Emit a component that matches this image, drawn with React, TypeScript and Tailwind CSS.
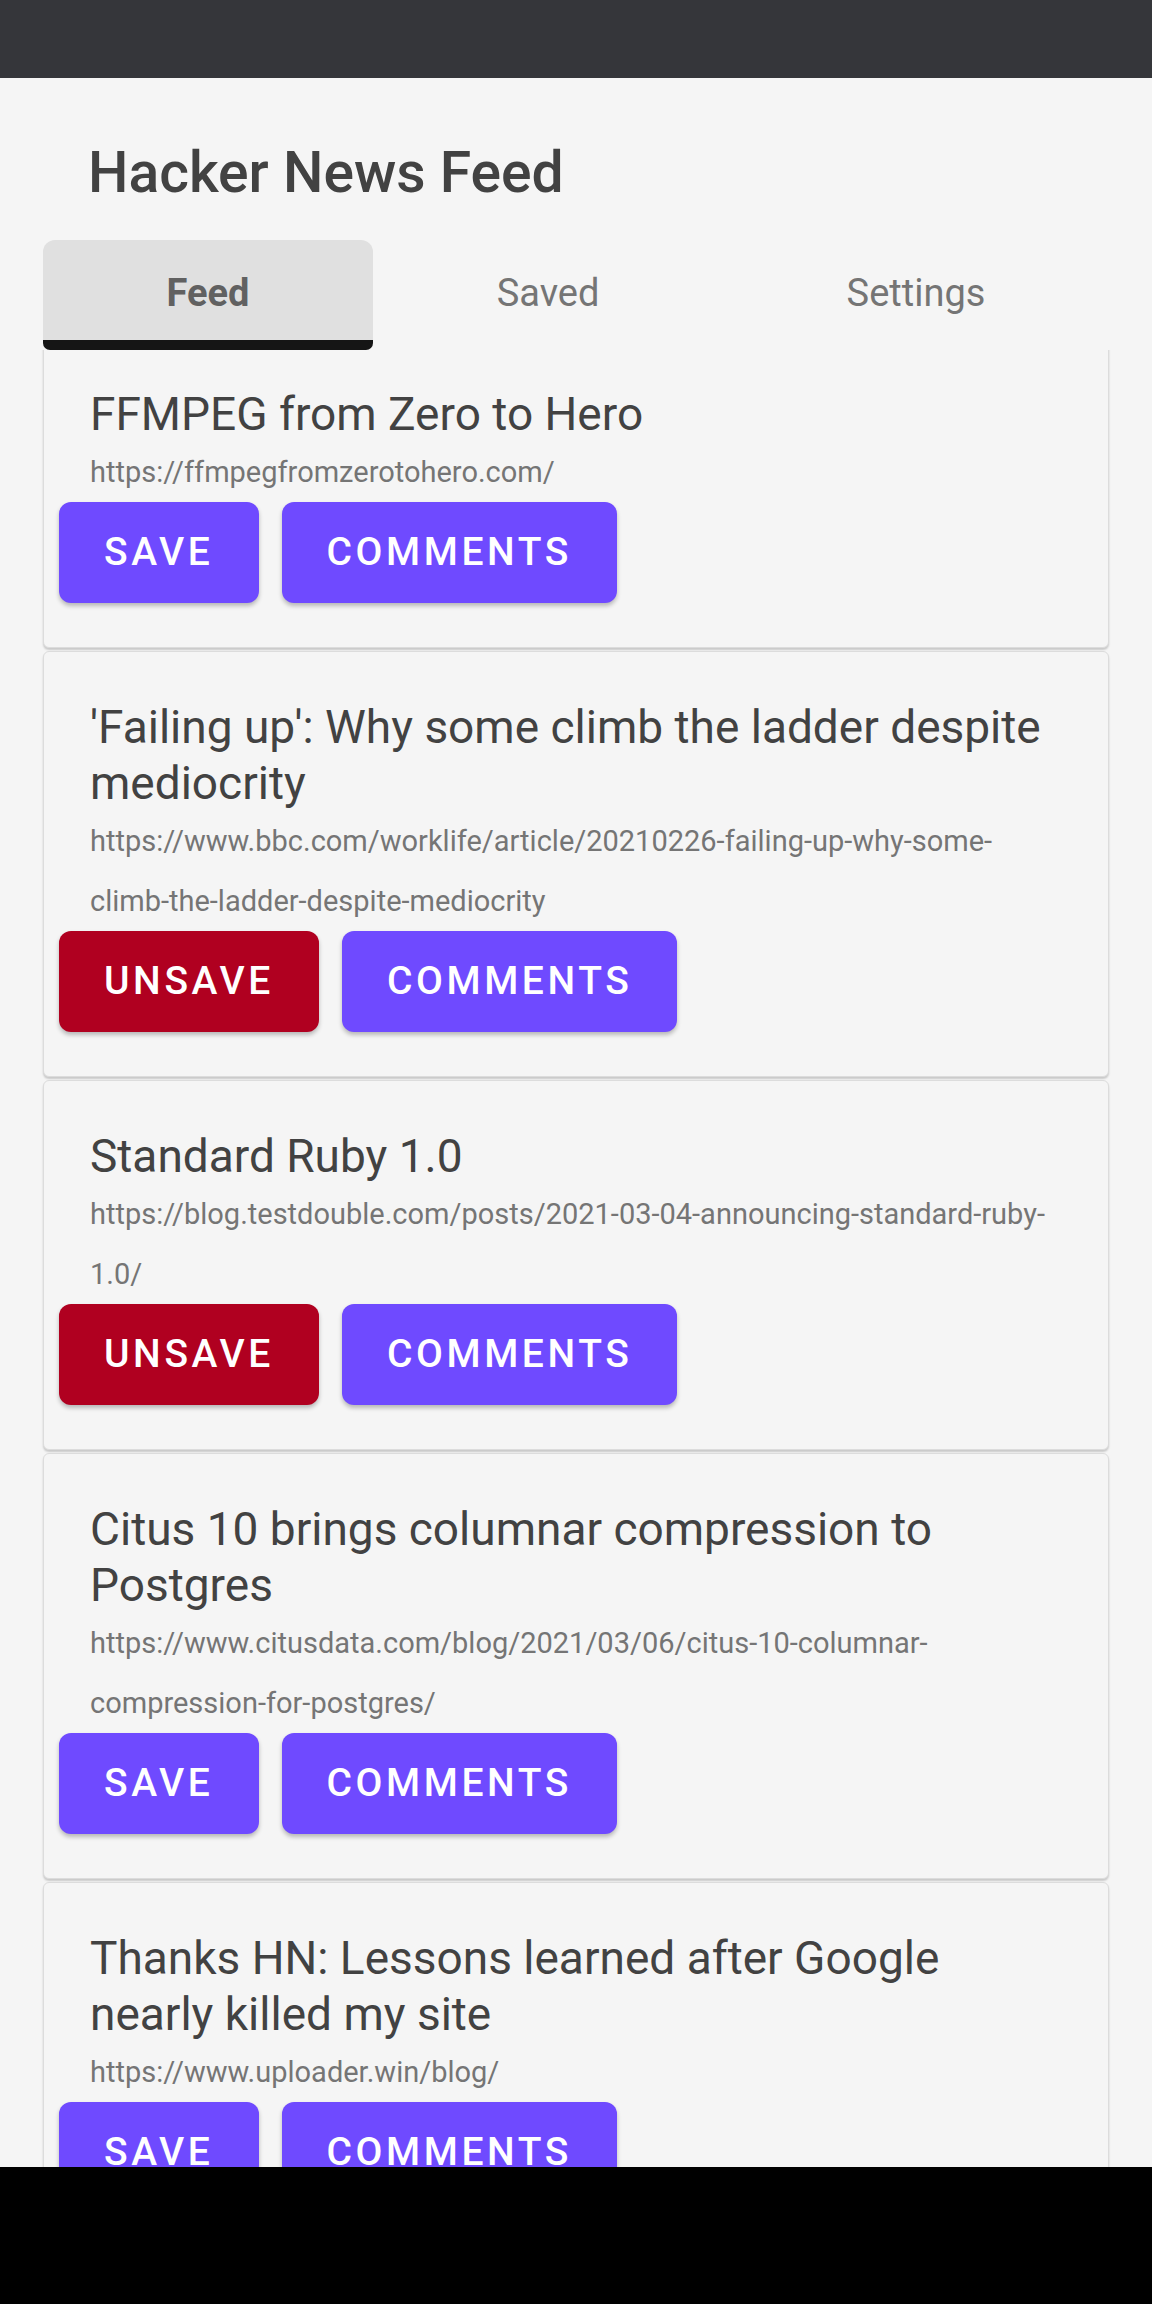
import React from "react"

type Story = {
	title: string
	url: string
	saved: boolean
}

const stories: Story[] = [
	{ title: "FFMPEG from Zero to Hero", url: "https://ffmpegfromzerotohero.com/", saved: false },
	{
		title: "'Failing up': Why some climb the ladder despite mediocrity",
		url: "https://www.bbc.com/worklife/article/20210226-failing-up-why-some-climb-the-ladder-despite-mediocrity",
		saved: true,
	},
	{
		title: "Standard Ruby 1.0",
		url: "https://blog.testdouble.com/posts/2021-03-04-announcing-standard-ruby-1.0/",
		saved: true,
	},
	{
		title: "Citus 10 brings columnar compression to Postgres",
		url: "https://www.citusdata.com/blog/2021/03/06/citus-10-columnar-compression-for-postgres/",
		saved: false,
	},
	{
		title: "Thanks HN: Lessons learned after Google nearly killed my site",
		url: "https://www.uploader.win/blog/",
		saved: false,
	},
]

const tabs = ["Feed", "Saved", "Settings"]

const StoryCard = ({ title, url, saved, first }: Story & { first?: boolean }) => {
	return (
		<div
			className={`mb-[3px] rounded-[6px] border border-[#dcdcdc] bg-[#f5f5f5] px-[15px] pb-[44px] pt-[47px] shadow-[0_2px_2px_rgba(0,0,0,0.18)] ${first ? "-mt-[12px]" : ""}`}
		>
			<div className="pl-[31px] pr-[25px]">
				<div className="text-[46px] leading-[56px] text-[#424242]">{title}</div>
				<div className="break-words text-[29px] leading-[60px] text-[#757575]">{url}</div>
			</div>
			<div className="flex gap-[23px]">
				<button
					className={`h-[101px] rounded-[12px] px-[45px] text-[39px] font-medium uppercase tracking-[3.6px] text-white shadow-[0_3px_4px_rgba(0,0,0,0.25)] ${saved ? "bg-[#b00020]" : "bg-[#6f4aff]"}`}
				>
					{saved ? "Unsave" : "Save"}
				</button>
				<button className="h-[101px] rounded-[12px] bg-[#6f4aff] px-[45px] text-[39px] font-medium uppercase tracking-[3.6px] text-white shadow-[0_3px_4px_rgba(0,0,0,0.25)]">
					Comments
				</button>
			</div>
		</div>
	)
}

export default function App() {
	return (
		<div className="flex h-[2304px] w-[1152px] flex-col overflow-hidden bg-[#f5f5f5] font-['Roboto',sans-serif]">
			<div className="h-[78px] shrink-0 bg-[#35363a]" />

			<h1 className="shrink-0 pl-[88px] pt-[66px] text-[57px] font-medium leading-none text-[#424242]">
				Hacker News Feed
			</h1>

			<div className="mt-[39px] flex shrink-0 px-[43px]">
				{tabs.map((tab, i) => (
					<div
						key={tab}
						className={`flex h-[110px] flex-auto items-center justify-center pt-[6px] text-[38px] ${
							i === 0
								? "rounded-b-[7px] rounded-t-[12px] border-b-[10px] border-[#151515] bg-[#e0e0e0] font-bold text-[#616161]"
								: "border-b-[10px] border-transparent text-[#757575]"
						}`}
					>
						{tab}
					</div>
				))}
			</div>

			<div className="min-h-0 flex-1 overflow-hidden px-[43px]">
				{stories.map((s, i) => (
					<StoryCard key={s.title} {...s} first={i === 0} />
				))}
			</div>

			<div className="h-[137px] shrink-0 bg-black" />
		</div>
	)
}
